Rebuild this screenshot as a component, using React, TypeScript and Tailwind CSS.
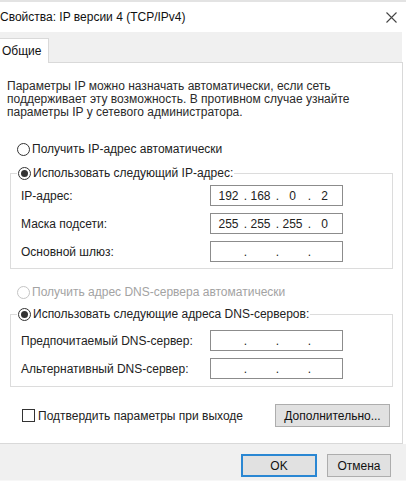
import React from 'react'

const font = "font-['Liberation_Sans','DejaVu_Sans',sans-serif]"

function Radio({ checked, disabled }: { checked?: boolean; disabled?: boolean }) {
  return (
    <span
      className={`w-[13px] h-[13px] rounded-full border bg-white flex items-center justify-center shrink-0 ${
        disabled ? 'border-[#c4c4c4]' : 'border-[#333333]'
      }`}
    >
      {checked && <span className="w-[7px] h-[7px] rounded-full bg-[#333333]" />}
    </span>
  )
}

function IpBox({ parts }: { parts: string[] }) {
  return (
    <div className="w-[133px] h-[21px] border border-[#8c8c8c] bg-white flex items-center pl-[4px] text-[12px] text-[#222]">
      {parts.map((p, i) => (
        <React.Fragment key={i}>
          <span className="w-[27px] text-center">{p}</span>
          {i < 3 && <span className="w-[5px] text-right">.</span>}
        </React.Fragment>
      ))}
    </div>
  )
}

function Row({ label, parts }: { label: string; parts: string[] }) {
  return (
    <div className="flex items-center h-[21px]">
      <span className="w-[189px] text-[12px] text-[#222]">{label}</span>
      <IpBox parts={parts} />
    </div>
  )
}

const empty = ['', '', '', '']

export default function App() {
  return (
    <div className={`w-[406px] h-[484px] bg-white flex flex-col overflow-hidden ${font}`}>
      {/* Title bar */}
      <div className="h-[32px] shrink-0 border-t-2 border-[#e3e3e3] flex items-center justify-between">
        <span className="text-[12px] text-[#111]">Свойства: IP версии 4 (TCP/IPv4)</span>
        <svg width="11" height="11" viewBox="0 0 11 11" className="mr-[9px]">
          <path d="M0.5 0.5 L10.5 10.5 M10.5 0.5 L0.5 10.5" stroke="#444" strokeWidth="1.1" />
        </svg>
      </div>

      {/* Tab strip */}
      <div className="h-[30px] shrink-0 w-[402px] bg-[#f0f0f0] flex items-end">
        <div className="relative z-10 mb-[-1px] h-[25px] w-[49px] bg-white border-t border-r border-[#d9d9d9] flex items-center pl-[2px] text-[12px] text-[#111]">
          Общие
        </div>
      </div>

      {/* Tab page */}
      <div className="w-[403px] h-[382px] shrink-0 bg-white border-t border-r border-b border-[#d9d9d9] pt-[17px]">
        <p className="pl-[7px] pr-[20px] text-[12px] leading-[13px] text-[#2a2a2a]">
          Параметры IP можно назначать автоматически, если сеть поддерживает эту возможность. В противном случае узнайте параметры IP у сетевого администратора.
        </p>

        <div className="mt-[22px] ml-[17px] flex items-center gap-[2px] h-[16px] text-[12px] text-[#222]">
          <Radio />
          <span>Получить IP-адрес автоматически</span>
        </div>

        <fieldset className="mt-[8px] ml-[10px] w-[383px] border border-[#dcdcdc] pl-[10px] pb-[6px]">
          <legend className="ml-[-4px] px-[1px] flex items-center gap-[2px] h-[16px] text-[12px] text-[#222]">
            <Radio checked />
            <span>Использовать следующий IP-адрес:</span>
          </legend>
          <div className="mt-[4px] flex flex-col gap-[7px]">
            <Row label="IP-адрес:" parts={['192', '168', '0', '2']} />
            <Row label="Маска подсети:" parts={['255', '255', '255', '0']} />
            <Row label="Основной шлюз:" parts={empty} />
          </div>
        </fieldset>

        <div className="mt-[15px] ml-[17px] flex items-center gap-[2px] h-[16px] text-[12px] text-[#a3a3a3]">
          <Radio disabled />
          <span>Получить адрес DNS-сервера автоматически</span>
        </div>

        <fieldset className="mt-[6px] ml-[10px] w-[383px] border border-[#dcdcdc] pl-[10px] pb-[7px]">
          <legend className="ml-[-4px] px-[1px] flex items-center gap-[2px] h-[16px] text-[12px] text-[#222]">
            <Radio checked />
            <span>Использовать следующие адреса DNS-серверов:</span>
          </legend>
          <div className="mt-[8px] flex flex-col gap-[7px]">
            <Row label="Предпочитаемый DNS-сервер:" parts={empty} />
            <Row label="Альтернативный DNS-сервер:" parts={empty} />
          </div>
        </fieldset>

        <div className="mt-[17px] flex items-center">
          <div className="ml-[22px] flex items-center gap-[3px] text-[12px] text-[#222]">
            <span className="w-[13px] h-[13px] border border-[#333] bg-white" />
            <span>Подтвердить параметры при выходе</span>
          </div>
          <button className="ml-auto mr-[12px] w-[115px] h-[23px] bg-[#e1e1e1] border border-[#adadad] text-[12px] text-[#111]">
            Дополнительно...
          </button>
        </div>
      </div>

      {/* Bottom buttons */}
      <div className="h-[37px] shrink-0 bg-[#f0f0f0] flex items-start pt-[10px] justify-end gap-[10px] pr-[15px] border-b border-[#f7f7f7]">
        <button className="w-[76px] h-[23px] bg-[#e1e1e1] border-2 border-[#2a87d3] text-[12px] text-[#111]">
          OK
        </button>
        <button className="w-[64px] h-[23px] bg-[#e1e1e1] border border-[#adadad] text-[12px] text-[#111]">
          Отмена
        </button>
      </div>
    </div>
  )
}
